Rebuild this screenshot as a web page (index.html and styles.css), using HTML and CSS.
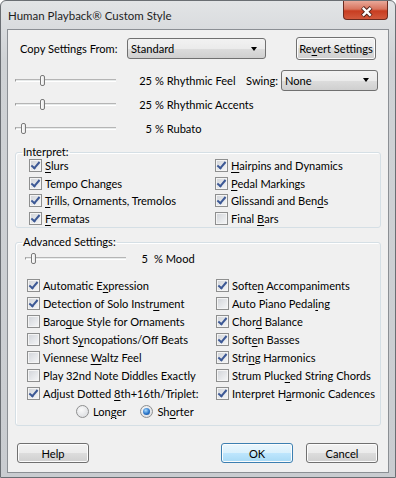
FILE: index.html
```html
<!DOCTYPE html>
<html lang="en">

<head>
    <meta charset="UTF-8">
    <meta name="viewport" content="width=device-width, initial-scale=1.0">
    <title>Human Playback Custom Style</title>
    <link rel="stylesheet" href="styles.css">
</head>

<body>
    <div class="window">
        <div class="titlebar">
            <span class="title">Human Playback® Custom Style</span>
            <div class="close">
                <svg width="45" height="19" viewBox="0 0 45 19">
                    <path d="M19.5 6.5 L28 15 M28 6.5 L19.5 15" stroke="#4a1e16" stroke-width="4.2" />
                    <path d="M19.8 6.8 L27.7 14.7 M27.7 6.8 L19.8 14.7" stroke="#ffffff" stroke-width="2.4" />
                </svg>
            </div>
        </div>

        <div class="client">
            <div class="copy-row">
                <span class="copy-label">Copy Settings From:</span>
                <div class="combo copy-combo"><span>Standard</span><i class="arrow"></i></div>
                <div class="btn revert"><span>Re<u>v</u>ert Settings</span></div>
            </div>

            <div class="slider-row">
                <div class="track"><span class="thumb" style="left: 23.5px"></span></div>
                <span class="num">25</span><span class="pct">% Rhythmic Feel</span>
                <span class="swing-label">Swing:</span>
                <div class="combo swing-combo"><span>None</span><i class="arrow"></i></div>
            </div>
            <div class="slider-row">
                <div class="track"><span class="thumb" style="left: 23.5px"></span></div>
                <span class="num">25</span><span class="pct">% Rhythmic Accents</span>
            </div>
            <div class="slider-row">
                <div class="track"><span class="thumb" style="left: 4.5px"></span></div>
                <span class="num">5</span><span class="pct">% Rubato</span>
            </div>

            <!-- Interpret -->
            <fieldset class="group interpret">
                <legend>Interpret:</legend>
                <div class="checks">
                    <label class="check"><span class="cb on"></span><span><u>S</u>lurs</span></label>
                    <label class="check"><span class="cb on"></span><span><u>H</u>airpins and Dynamics</span></label>
                    <label class="check"><span class="cb on"></span><span>Tempo Changes</span></label>
                    <label class="check"><span class="cb on"></span><span><u>P</u>edal Markings</span></label>
                    <label class="check"><span class="cb on"></span><span><u>T</u>rills, Ornaments, Tremolos</span></label>
                    <label class="check"><span class="cb on"></span><span>Glissandi and Ben<u>d</u>s</span></label>
                    <label class="check"><span class="cb on"></span><span><u>F</u>ermatas</span></label>
                    <label class="check"><span class="cb"></span><span>Final <u>B</u>ars</span></label>
                </div>
            </fieldset>

            <!-- Advanced -->
            <fieldset class="group advanced">
                <legend>Advanced Settings:</legend>
                <div class="mood-row">
                    <div class="track"><span class="thumb" style="left: 4.5px"></span></div>
                    <span class="num">5</span><span class="pct">% Mood</span>
                </div>
                <div class="checks">
                    <label class="check"><span class="cb on"></span><span>Automatic E<u>x</u>pression</span></label>
                    <label class="check"><span class="cb on"></span><span>Softe<u>n</u> Accompaniments</span></label>
                    <label class="check"><span class="cb on"></span><span>Detection of Solo Instr<u>u</u>ment</span></label>
                    <label class="check"><span class="cb"></span><span>Auto Piano Pedal<u>i</u>ng</span></label>
                    <label class="check"><span class="cb"></span><span>Baro<u>q</u>ue Style for Ornaments</span></label>
                    <label class="check"><span class="cb on"></span><span>Chor<u>d</u> Balance</span></label>
                    <label class="check"><span class="cb"></span><span>Short S<u>y</u>ncopations/Off Beats</span></label>
                    <label class="check"><span class="cb on"></span><span>Soft<u>e</u>n Basses</span></label>
                    <label class="check"><span class="cb"></span><span>Viennese <u>W</u>altz Feel</span></label>
                    <label class="check"><span class="cb on"></span><span>Stri<u>n</u>g Harmonics</span></label>
                    <label class="check"><span class="cb"></span><span>Play 32nd Note Diddles Exactly</span></label>
                    <label class="check"><span class="cb"></span><span>Strum Pluc<u>k</u>ed String Chords</span></label>
                    <label class="check"><span class="cb on"></span><span>Adjust Dotted <u>8</u>th+16th/Triplet:</span></label>
                    <label class="check"><span class="cb on"></span><span>Interpret H<u>a</u>rmonic Cadences</span></label>
                </div>
                <div class="radio-row">
                    <label class="radio"><span class="rb"></span><span>Lon<u>g</u>er</span></label>
                    <label class="radio"><span class="rb on"></span><span>Sh<u>o</u>rter</span></label>
                </div>
            </fieldset>

            <div class="buttons">
                <div class="btn help">Help</div>
                <div class="btn ok">OK</div>
                <div class="btn cancel">Cancel</div>
            </div>
        </div>
    </div>
</body>

</html>
```

FILE: styles.css
```css
body {
    margin: 0;
    font-family: Lato, "Liberation Sans", sans-serif;
    font-size: 11.1px;
    color: #000;
}

u {
    text-decoration: underline;
    text-underline-offset: 2px;
}

.window {
    width: 396px;
    height: 478px;
    box-sizing: border-box;
    border: 1px solid #6a6e73;
    border-radius: 6px 6px 0 0;
    background: linear-gradient(#e2e4e6, #cfd2d5 60px, #c9ccd0);
    padding: 0 6px 4px 6px;
    display: flex;
    flex-direction: column;
    white-space: nowrap;
}

.titlebar {
    height: 28px;
    display: flex;
    justify-content: space-between;
    align-items: flex-start;
}

.title {
    line-height: 29px;
    padding-left: 1px;
    font-size: 11.5px;
    color: #1e1e1e;
}

.close {
    width: 45px;
    height: 19px;
    margin-right: 1px;
    box-sizing: border-box;
    border: 1px solid #6b2b20;
    border-top: none;
    border-radius: 0 0 4px 4px;
    background: linear-gradient(#e9a899, #d8745e 45%, #c83d21 55%, #d2593d);
}

.close svg {
    display: block;
    margin-left: -1px;
}

.client {
    flex: 1;
    border: 1px solid #8b8f94;
    background: #f0f0f0;
}

/* top row */
.copy-row {
    margin-top: 7px;
    height: 23px;
    display: flex;
    align-items: center;
}

.copy-label {
    width: 107px;
    padding-left: 12px;
    flex: none;
}

.combo {
    height: 21px;
    box-sizing: border-box;
    border: 1px solid #707070;
    border-radius: 3px;
    background: linear-gradient(#f2f2f2, #ebebeb 50%, #dddddd 50%, #cfcfcf);
    display: flex;
    align-items: center;
    justify-content: space-between;
    padding: 0 8px 0 3px;
}

.copy-combo {
    width: 139px;
}

.arrow {
    width: 0;
    height: 0;
    border-left: 3.5px solid transparent;
    border-right: 3.5px solid transparent;
    border-top: 4px solid #000;
}

.btn {
    height: 23px;
    box-sizing: border-box;
    border: 1px solid #707070;
    border-radius: 3px;
    background: linear-gradient(#f2f2f2, #ebebeb 50%, #dddddd 50%, #cfcfcf);
    box-shadow: inset 0 0 0 1px #fcfcfc;
    display: flex;
    align-items: center;
    justify-content: center;
}

.revert {
    width: 80px;
    margin-left: 30px;
}

/* sliders */
.slider-row {
    height: 24px;
    display: flex;
    align-items: center;
    padding-left: 7px;
}

.slider-row:nth-of-type(2) {
    margin-top: 8px;
}

.track {
    position: relative;
    width: 101px;
    height: 3px;
    box-sizing: border-box;
    border-top: 1px solid #b5b5b5;
    border-left: 1px solid #9a9a9a;
    background: #e7eaea;
    border-bottom: 1px solid #fff;
    flex: none;
}

.thumb {
    position: absolute;
    top: -5px;
    width: 5px;
    height: 11px;
    box-sizing: border-box;
    border: 1px solid #7a7a7a;
    border-radius: 2px;
    background: linear-gradient(90deg, #fff, #e6e6e6);
}

.num {
    width: 36px;
    text-align: right;
    flex: none;
}

.pct {
    margin-left: 3px;
}

.swing-label {
    margin-left: auto;
    margin-right: 3px;
}

.swing-combo {
    width: 97px;
    margin-right: 10px;
}

/* group boxes */
.group {
    margin: 0 0 0 7px;
    width: 366px;
    box-sizing: border-box;
    border: 1px solid #d5dfe5;
    border-radius: 3px;
    padding: 0;
    box-shadow: inset 1px 1px 0 #fff;
}

.group legend {
    margin-left: 6px;
    padding: 0 1px;
    line-height: 14px;
}

.interpret {
    margin-top: 5px;
}

.checks {
    display: grid;
    grid-template-columns: 186px auto;
}

.interpret .checks {
    margin-top: -2px;
    padding-left: 13px;
    grid-auto-rows: 17.5px;
}

.advanced {
    margin-top: 7px;
    padding-bottom: 5px;
}

.advanced .checks {
    margin-top: 8px;
    padding-left: 11px;
    grid-template-columns: 189px auto;
    grid-auto-rows: 18px;
}

.check {
    display: flex;
    align-items: center;
}

.cb {
    position: relative;
    width: 13px;
    height: 13px;
    box-sizing: border-box;
    border: 1px solid #8e8f8f;
    background: linear-gradient(135deg, #d0d3d8, #f6f7f8);
    box-shadow: inset 0 0 0 1px #f4f4f4;
    margin-right: 3px;
    flex: none;
}

.cb.on::after {
    content: "";
    position: absolute;
    left: 3px;
    top: 0;
    width: 3px;
    height: 7px;
    border: solid #3c5895;
    border-width: 0 2px 2px 0;
    transform: rotate(40deg);
}

.mood-row {
    height: 20px;
    margin-top: -1px;
    display: flex;
    align-items: center;
    padding-left: 9px;
}

.mood-row .num {
    width: 22px;
}

.mood-row .pct {
    margin-left: 6px;
}

.radio-row {
    height: 18px;
    display: flex;
    align-items: center;
    padding-left: 60px;
}

.radio {
    display: flex;
    align-items: center;
    margin-right: 14px;
}

.rb {
    width: 13px;
    height: 13px;
    box-sizing: border-box;
    border: 1px solid #8e8f8f;
    border-radius: 50%;
    background: radial-gradient(circle at 40% 35%, #fafafa, #d6d8dc);
    margin-right: 4px;
    display: flex;
    align-items: center;
    justify-content: center;
}

.rb.on::after {
    content: "";
    width: 7px;
    height: 7px;
    border-radius: 50%;
    background: radial-gradient(circle at 40% 35%, #a8dcff, #2a74c8 55%, #134b8e);
}

/* bottom buttons */
.buttons {
    margin-top: 17px;
    display: flex;
    padding-left: 9px;
}

.buttons .btn {
    width: 72px;
    height: 20px;
}

.buttons .ok {
    margin-left: auto;
    border-color: #3c7fb1;
    background: linear-gradient(#eaf6fd, #d9f0fc 50%, #bee6fd 50%, #a7d9f5);
}

.cancel {
    margin-left: 13px;
    margin-right: 10px;
}
```
